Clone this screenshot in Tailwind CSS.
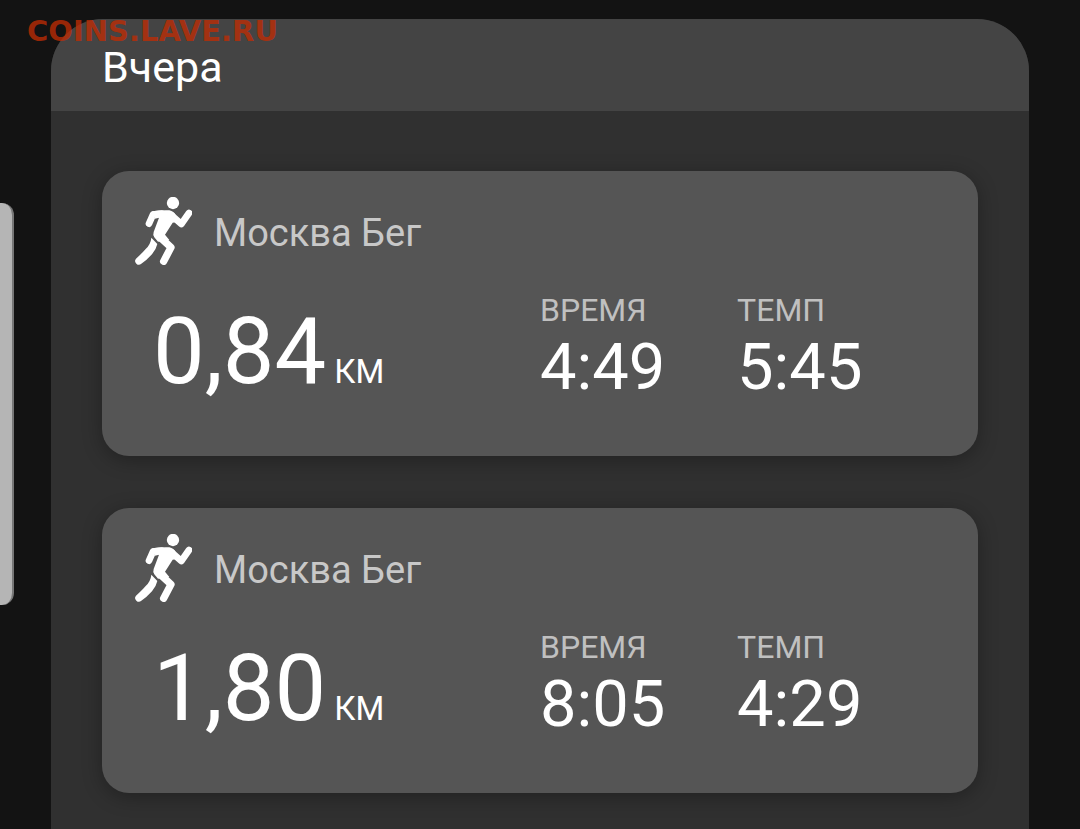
<!DOCTYPE html>
<html lang="ru">
<head>
    <meta charset="UTF-8">
    <meta name="viewport" content="width=device-width, initial-scale=1.0">
    <title>Вчера</title>
    <script src="https://cdn.jsdelivr.net/npm/@tailwindcss/browser@4"></script>
</head>

<body class="relative min-h-screen overflow-hidden bg-[#131313] font-['Roboto',sans-serif] text-white flex flex-col px-[51px] pt-[19px]">
    <svg class="hidden">
        <symbol id="runner" viewBox="45 36 171 204">
            <circle cx="159" cy="54" r="18.500" fill="currentColor"/>
            <!-- руки -->
            <path d="M87 116L99 89L125 86M156 92L184 117L207 84" fill="none" stroke="currentColor" stroke-width="20" stroke-linecap="round" stroke-linejoin="round"/>
            <!-- корпус -->
            <path d="M96 79Q122 75 148 76Q162 79 167 90L174 110L158 113L135 149L148 165L114 170L103 157Q98 150 101 141L117 98L105 101Z" fill="currentColor"/>
            <!-- ноги -->
            <path d="M113 150L153 187L131 229" fill="none" stroke="currentColor" stroke-width="22" stroke-linecap="round" stroke-linejoin="round"/>
            <path d="M94 158L112 177Q109 192 96 208Q80 226 64 236A11 11 0 0 1 48 221Q67 204 77 192Q92 178 94 158Z" fill="currentColor"/>
        </symbol>
    </svg>

    <!-- Боковая панель -->
    <div class="absolute left-0 top-[203px] h-[402px] w-[14px] rounded-r-xl border-r-2 border-[#777777] bg-[#b5b5b5]"></div>

    <main class="flex-1 flex flex-col overflow-hidden rounded-t-[52px] bg-[#303030]">
        <header class="bg-[#444444] px-[51px] pt-6 pb-5">
            <h1 class="text-[43px] leading-[48px]">Вчера</h1>
        </header>

        <!-- Тренировки -->
        <div class="flex flex-col gap-[52px] px-[51px] pt-[60px] pb-9">
            <article class="rounded-[27px] bg-[#555555] pt-[26px] pb-[50px] shadow-[0_4px_20px_rgba(0,0,0,0.3)]">
                <div class="flex items-center pl-[33px]">
                    <svg class="w-[57px] h-[68px]"><use href="#runner"/></svg>
                    <h2 class="pl-[22px] pt-1 text-[38px] leading-[44px] text-[#c8c8c8]">Москва Бег</h2>
                </div>
                <div class="mt-[25px] grid grid-cols-[50%_22.5%_1fr]">
                    <p class="flex items-baseline gap-2 pl-[51px] pt-2 text-[92px] leading-[108px]">0,84 <span class="text-[33px] leading-none">КМ</span></p>
                    <dl>
                        <dt class="text-[32px] leading-[40px] text-[#c0c0c0]">ВРЕМЯ</dt>
                        <dd class="text-[65px] leading-[74px]">4:49</dd>
                    </dl>
                    <dl>
                        <dt class="text-[32px] leading-[40px] text-[#c0c0c0]">ТЕМП</dt>
                        <dd class="text-[65px] leading-[74px]">5:45</dd>
                    </dl>
                </div>
            </article>

            <article class="rounded-[27px] bg-[#555555] pt-[26px] pb-[50px] shadow-[0_4px_20px_rgba(0,0,0,0.3)]">
                <div class="flex items-center pl-[33px]">
                    <svg class="w-[57px] h-[68px]"><use href="#runner"/></svg>
                    <h2 class="pl-[22px] pt-1 text-[38px] leading-[44px] text-[#c8c8c8]">Москва Бег</h2>
                </div>
                <div class="mt-[25px] grid grid-cols-[50%_22.5%_1fr]">
                    <p class="flex items-baseline gap-2 pl-[51px] pt-2 text-[92px] leading-[108px]">1,80 <span class="text-[33px] leading-none">КМ</span></p>
                    <dl>
                        <dt class="text-[32px] leading-[40px] text-[#c0c0c0]">ВРЕМЯ</dt>
                        <dd class="text-[65px] leading-[74px]">8:05</dd>
                    </dl>
                    <dl>
                        <dt class="text-[32px] leading-[40px] text-[#c0c0c0]">ТЕМП</dt>
                        <dd class="text-[65px] leading-[74px]">4:29</dd>
                    </dl>
                </div>
            </article>
        </div>
    </main>

    <!-- Водяной знак -->
    <div class="absolute left-[27px] top-[14px] font-['DejaVu_Sans',sans-serif] text-[29px] leading-[34px] font-bold text-[#be2c04]/80">COINS.LAVE.RU</div>
</body>
</html>
